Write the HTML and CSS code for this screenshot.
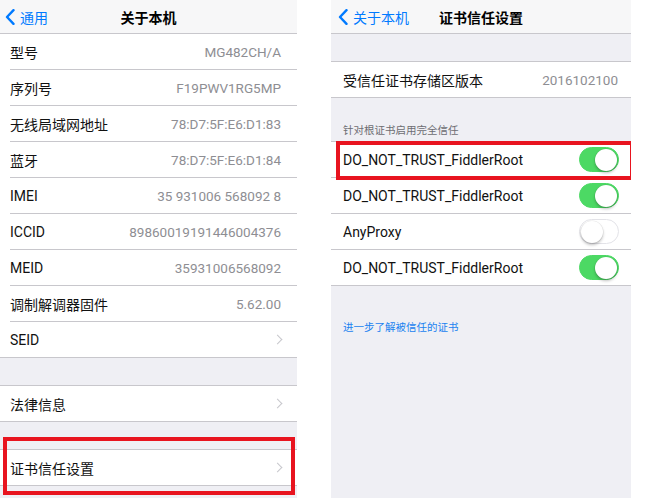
FILE: index.html
```html
<!DOCTYPE html>
<html lang="zh-CN">
<head>
  <meta charset="UTF-8">
  <title>关于本机 / 证书信任设置</title>
  <link rel="stylesheet" href="styles.css">
</head>
<body>
  <div class="screen screen-left">
    <div class="nav">
      <div class="back">
        <svg class="back-icon" width="10" height="16" viewBox="0 0 10 16"><path d="M8.5 1.2 L2 8 L8.5 14.8" fill="none" stroke="#007aff" stroke-width="2.4" stroke-linecap="round" stroke-linejoin="round"/></svg>
        <span>通用</span>
      </div>
      <div class="nav-title">关于本机</div>
    </div>

    <div class="group">
      <div class="row"><span class="label">型号</span><span class="value">MG482CH/A</span></div>
      <div class="row"><span class="label">序列号</span><span class="value">F19PWV1RG5MP</span></div>
      <div class="row"><span class="label">无线局域网地址</span><span class="value">78:D7:5F:E6:D1:83</span></div>
      <div class="row"><span class="label">蓝牙</span><span class="value">78:D7:5F:E6:D1:84</span></div>
      <div class="row"><span class="label">IMEI</span><span class="value">35 931006 568092 8</span></div>
      <div class="row"><span class="label">ICCID</span><span class="value">89860019191446004376</span></div>
      <div class="row"><span class="label">MEID</span><span class="value">35931006568092</span></div>
      <div class="row"><span class="label">调制解调器固件</span><span class="value">5.62.00</span></div>
      <div class="row"><span class="label">SEID</span><span class="chevron"></span></div>
    </div>

    <div class="group group-spaced">
      <div class="row"><span class="label">法律信息</span><span class="chevron"></span></div>
    </div>

    <div class="group group-spaced">
      <div class="row mark-left"><span class="label">证书信任设置</span><span class="chevron"></span></div>
    </div>
  </div>

  <div class="screen screen-right">
    <div class="nav">
      <div class="back">
        <svg class="back-icon" width="10" height="16" viewBox="0 0 10 16"><path d="M8.5 1.2 L2 8 L8.5 14.8" fill="none" stroke="#007aff" stroke-width="2.4" stroke-linecap="round" stroke-linejoin="round"/></svg>
        <span>关于本机</span>
      </div>
      <div class="nav-title">证书信任设置</div>
    </div>

    <div class="group group-flat group-top">
      <div class="row"><span class="label">受信任证书存储区版本</span><span class="value">2016102100</span></div>
    </div>

    <div class="section-header">针对根证书启用完全信任</div>

    <div class="group group-flat">
      <div class="row mark-right"><span class="label">DO_NOT_TRUST_FiddlerRoot</span><span class="switch on"></span></div>
      <div class="row"><span class="label">DO_NOT_TRUST_FiddlerRoot</span><span class="switch on"></span></div>
      <div class="row"><span class="label">AnyProxy</span><span class="switch"></span></div>
      <div class="row"><span class="label">DO_NOT_TRUST_FiddlerRoot</span><span class="switch on"></span></div>
    </div>

    <div class="footer-link">进一步了解被信任的证书</div>
  </div>
</body>
</html>
```

FILE: styles.css
```css
body {
  margin: 0;
  background-color: #fff;
  font-family: "Roboto", "Noto Sans CJK SC", sans-serif;
  color: #111;
  display: flex;
  align-items: flex-start;
}
.screen {
  height: 498px;
  background-color: #efeff4;
  overflow: hidden;
}
.screen-left {
  width: 297px;
}
.screen-right {
  width: 300px;
  margin-left: 34px;
}
.nav {
  height: 34px;
  box-sizing: border-box;
  background-color: #f7f7f8;
  border-bottom: 1px solid #c8c7cc;
  display: flex;
  align-items: center;
  justify-content: center;
  position: relative;
}
.back {
  position: absolute;
  left: 5px;
  top: 0;
  height: 33px;
  display: flex;
  align-items: center;
  gap: 5px;
  color: #007aff;
  font-size: 14px;
}
.screen-right .back {
  left: 7px;
}
.nav-title {
  font-size: 14px;
  font-weight: 600;
  color: #000;
}
.group {
  background-color: #fff;
  border-bottom: 1px solid #c8c7cc;
  padding-left: 10px;
}
.group-spaced {
  margin-top: 27px;
  border-top: 1px solid #c8c7cc;
}
.group-flat {
  padding-left: 0;
  border-top: 1px solid #c8c7cc;
}
.group-top {
  margin-top: 27px;
}
.row {
  height: 36px;
  box-sizing: border-box;
  border-bottom: 1px solid #c8c7cc;
  padding-right: 15px;
  display: flex;
  align-items: center;
  justify-content: space-between;
  font-size: 14px;
  position: relative;
}
.row:last-child {
  border-bottom: none;
  height: 35px;
}
.group-flat .row {
  padding-left: 12px;
  padding-right: 12px;
}
.value {
  color: #8e8e93;
  font-size: 13.5px;
  margin-right: 1px;
}
.chevron {
  width: 6px;
  height: 6px;
  border-top: 1.5px solid #c7c7cc;
  border-right: 1.5px solid #c7c7cc;
  transform: rotate(45deg);
  margin-right: 1px;
}
.section-header {
  font-size: 10.5px;
  color: #6d6d72;
  padding: 26px 12px 3px;
  line-height: 14px;
}
.switch {
  width: 40px;
  height: 25px;
  box-sizing: border-box;
  border-radius: 13px;
  border: 1px solid #e3e3e8;
  background-color: #fff;
  display: flex;
  align-items: center;
  padding: 0 1px;
}
.switch::before {
  content: "";
  width: 22px;
  height: 22px;
  border-radius: 50%;
  background-color: #fff;
  box-shadow: 0 2px 3px rgba(0,0,0,0.25), 0 0 0 0.5px rgba(0,0,0,0.08);
}
.switch.on {
  background-color: #4cd964;
  border-color: #4cd964;
  justify-content: flex-end;
}
.footer-link {
  margin-top: 33px;
  padding-left: 12px;
  font-size: 10.5px;
  color: #1a82f0;
}
.mark-left::after,
.mark-right::after {
  content: "";
  position: absolute;
  border: 4px solid #e8141f;
}
.mark-left::after {
  top: -13px;
  bottom: -10px;
  left: -7px;
  right: 2px;
}
.mark-right::after {
  top: -1px;
  bottom: -3px;
  left: 5px;
  right: -3px;
}
```
